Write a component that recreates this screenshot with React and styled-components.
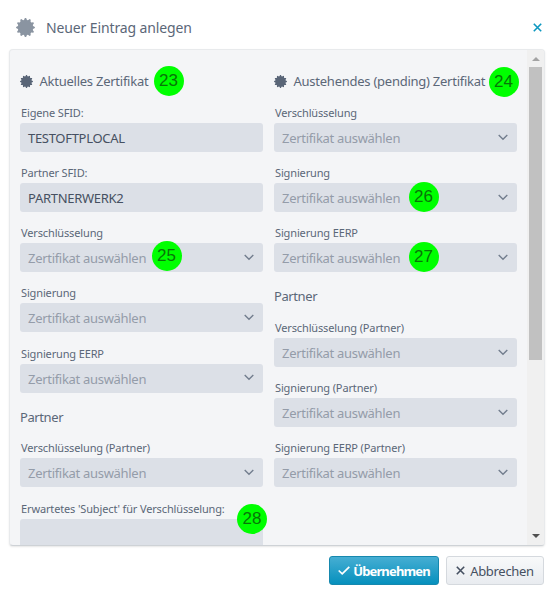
import React from "react";
import styled, { createGlobalStyle } from "styled-components";

const GlobalStyle = createGlobalStyle`
  * {
    box-sizing: border-box;
  }

  body {
    margin: 0;
    background: #fff;
    color: #5b6778;
    font-family: "Noto Sans", "Open Sans", sans-serif;
    font-size: 13px;
  }
`;

const Dialog = styled.div`
  position: relative;
  width: 554px;
  height: 594px;
  overflow: hidden;
  display: flex;
  flex-direction: column;
`;

const Header = styled.header`
  flex: none;
  height: 49px;
  padding: 6px 12px 0 16px;
  display: flex;
  align-items: center;
`;

const Title = styled.h1`
  flex: 1;
  margin: 0 0 0 11px;
  font-size: 14px;
  font-weight: 400;
  letter-spacing: -0.12px;
  line-height: 20px;
  white-space: nowrap;
`;

const CloseButton = styled.button`
  display: flex;
  padding: 0;
  border: 0;
  background: none;
  color: #0d98c0;
`;

const Panel = styled.main`
  flex: none;
  height: 497px;
  margin: 0 9px;
  display: flex;
  overflow: hidden;
  border: 1px solid #e8eaec;
  border-bottom-color: #ced2d6;
  border-radius: 4px;
  background: #f4f5f7;
  box-shadow: 0 1px 2px rgba(0, 0, 0, 0.1);
`;

const Columns = styled.div`
  flex: 1;
  padding: 20px 10px 0;
  display: grid;
  grid-template-columns: 243px 243px;
  column-gap: 11px;
`;

const ColumnTitle = styled.h2`
  height: 33px;
  margin: 0;
  display: flex;
  align-items: flex-start;
  gap: 6.5px;
  font-size: 13px;
  font-weight: 400;
  letter-spacing: -0.25px;
  line-height: 22px;
  white-space: nowrap;

  svg {
    margin-top: 5px;
  }
`;

const GroupTitle = styled.h3`
  height: 34.7px;
  margin: 0;
  font-size: 13px;
  font-weight: 400;
  letter-spacing: -0.4px;
  line-height: 26px;
`;

const FieldBox = styled.div`
  height: 60.17px;
`;

const Label = styled.label`
  display: block;
  height: 20px;
  padding-left: 1px;
  font-size: 11px;
  letter-spacing: -0.14px;
  line-height: 19px;
  white-space: nowrap;
`;

const Input = styled.div`
  height: 29px;
  padding: 1px 9px 0 8px;
  display: flex;
  align-items: center;
  justify-content: space-between;
  border-radius: 3px;
  background: #dce0e7;
  color: ${({ $placeholder }) => ($placeholder ? "#949ca9" : "#465061")};
  font-size: 13px;
  letter-spacing: -0.3px;
  white-space: nowrap;

  svg {
    margin-bottom: 2px;
  }
`;

const Scrollbar = styled.div`
  width: 18px;
  padding: 7px 2px 7px;
  display: flex;
  flex-direction: column;
  align-items: center;
  background: #f0f0f0;
`;

const Thumb = styled.div`
  width: 13px;
  height: 293px;
  margin: 6px 0 auto;
  background: #c1c1c1;
`;

const Footer = styled.footer`
  padding: 10px 10px 0;
  display: flex;
  justify-content: flex-end;
  gap: 7px;
`;

const Button = styled.button`
  width: ${({ $primary }) => ($primary ? "110px" : "98px")};
  height: 29px;
  padding: 0;
  display: flex;
  align-items: center;
  justify-content: center;
  gap: ${({ $primary }) => ($primary ? "3px" : "5px")};
  border: 1px solid ${({ $primary }) => ($primary ? "#1688ae" : "#d5d9de")};
  border-radius: 3px;
  background: ${({ $primary }) =>
    $primary
      ? "linear-gradient(#46aed3, #0690bd)"
      : "linear-gradient(#f8f9fa, #e9ecf0)"};
  color: ${({ $primary }) => ($primary ? "#fff" : "#465061")};
  font: inherit;
  font-weight: ${({ $primary }) => ($primary ? 700 : 400)};
  letter-spacing: ${({ $primary }) => ($primary ? "-0.85px" : "-0.3px")};
  white-space: nowrap;
`;

const Badge = styled.span`
  position: absolute;
  left: ${({ $x }) => $x - 15}px;
  top: ${({ $y }) => $y - 15}px;
  width: 30px;
  height: 30px;
  border-radius: 50%;
  background: #00ff00;
  color: #087508;
  font-family: "Liberation Sans", sans-serif;
  font-size: 17px;
  line-height: 29px;
  text-align: center;
`;

// twelve blunt teeth around the rim
const sealPoints = Array.from({ length: 48 }, (_, i) => {
  const radius = i % 4 < 2 ? 9.9 : 8.1;
  const angle = ((i - 0.5) * Math.PI) / 24;
  return `${10 + radius * Math.sin(angle)},${10 - radius * Math.cos(angle)}`;
}).join(" ");

const Seal = ({ size, color }) => (
  <svg width={size} height={size} viewBox="0 0 20 20">
    <polygon points={sealPoints} fill={color} />
  </svg>
);

const Chevron = () => (
  <svg width="10" height="7" viewBox="0 0 10 7">
    <path d="M.7 1 5 5.2 9.3 1" fill="none" stroke="#737e8e" strokeWidth="1.4" />
  </svg>
);

const Cross = ({ size = 9 }) => (
  <svg width={size} height={size} viewBox="0 0 9 9">
    <path d="m.8.8 7.4 7.4M8.2.8.8 8.2" stroke="currentColor" strokeWidth="1.6" />
  </svg>
);

const Check = () => (
  <svg width="12" height="9" viewBox="0 0 12 9">
    <path d="m.7 4.5 3.5 3.3L11.3.8" fill="none" stroke="currentColor" strokeWidth="1.7" />
  </svg>
);

const Arrow = ({ down }) => (
  <svg width="8" height="4" viewBox="0 0 8 4">
    <path d={down ? "M0 0h8L4 4z" : "M0 4h8L4 0z"} fill={down ? "#505050" : "#a3a3a3"} />
  </svg>
);

const Field = ({ label, value }) => (
  <FieldBox>
    <Label>{label}</Label>
    <Input $placeholder={value === undefined}>
      {value === undefined ? "Zertifikat auswählen" : value}
      {value === undefined && <Chevron />}
    </Input>
  </FieldBox>
);

const badges = [
  [23, 168.5, 80.5],
  [24, 503.5, 82],
  [25, 166.5, 256],
  [26, 423.5, 197],
  [27, 423.5, 256.5],
  [28, 252, 519],
];

const App = () => (
  <Dialog>
    <GlobalStyle />
    <Header>
      <Seal size={19} color="#8a94a1" />
      <Title>Neuer Eintrag anlegen</Title>
      <CloseButton aria-label="Schließen">
        <Cross />
      </CloseButton>
    </Header>
    <Panel>
      <Columns>
        <section>
          <ColumnTitle>
            <Seal size={13} color="#596577" />
            Aktuelles Zertifikat
          </ColumnTitle>
          <Field label="Eigene SFID:" value="TESTOFTPLOCAL" />
          <Field label="Partner SFID:" value="PARTNERWERK2" />
          <Field label="Verschlüsselung" />
          <Field label="Signierung" />
          <Field label="Signierung EERP" />
          <GroupTitle>Partner</GroupTitle>
          <Field label="Verschlüsselung (Partner)" />
          <Field label="Erwartetes 'Subject' für Verschlüsselung:" value="" />
        </section>
        <section>
          <ColumnTitle>
            <Seal size={13} color="#596577" />
            Austehendes (pending) Zertifikat
          </ColumnTitle>
          <Field label="Verschlüsselung" />
          <Field label="Signierung" />
          <Field label="Signierung EERP" />
          <GroupTitle>Partner</GroupTitle>
          <Field label="Verschlüsselung (Partner)" />
          <Field label="Signierung (Partner)" />
          <Field label="Signierung EERP (Partner)" />
        </section>
      </Columns>
      <Scrollbar>
        <Arrow />
        <Thumb />
        <Arrow down />
      </Scrollbar>
    </Panel>
    <Footer>
      <Button $primary>
        <Check />
        Übernehmen
      </Button>
      <Button>
        <Cross />
        Abbrechen
      </Button>
    </Footer>
    {badges.map(([number, x, y]) => (
      <Badge key={number} $x={x} $y={y}>
        {number}
      </Badge>
    ))}
  </Dialog>
);

export default App;
